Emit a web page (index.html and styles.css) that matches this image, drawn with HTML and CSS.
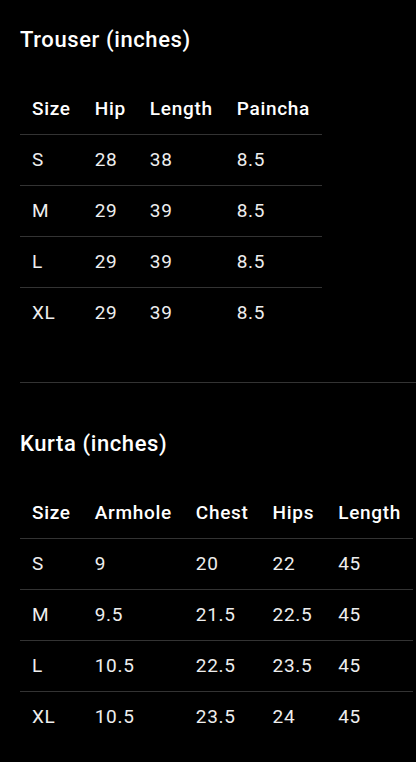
FILE: index.html
```html
<!DOCTYPE html>
<html lang="en">
<head>
    <meta charset="UTF-8">
    <meta name="viewport" content="width=device-width, initial-scale=1.0">
    <title>Size Chart</title>
    <link rel="stylesheet" href="styles.css">
</head>
<body>

    <div class="chart">
        <h2>Trouser (inches)</h2>
        <table class="sizes">
            <thead>
                <tr>
                    <th>Size</th>
                    <th>Hip</th>
                    <th>Length</th>
                    <th>Paincha</th>
                </tr>
            </thead>
            <tbody>
                <tr><td>S</td><td>28</td><td>38</td><td>8.5</td></tr>
                <tr><td>M</td><td>29</td><td>39</td><td>8.5</td></tr>
                <tr><td>L</td><td>29</td><td>39</td><td>8.5</td></tr>
                <tr><td>XL</td><td>29</td><td>39</td><td>8.5</td></tr>
            </tbody>
        </table>
    </div>

    <hr class="divider">

    <div class="chart">
        <h2>Kurta (inches)</h2>
        <table class="sizes">
            <thead>
                <tr>
                    <th>Size</th>
                    <th>Armhole</th>
                    <th>Chest</th>
                    <th>Hips</th>
                    <th>Length</th>
                </tr>
            </thead>
            <tbody>
                <tr><td>S</td><td>9</td><td>20</td><td>22</td><td>45</td></tr>
                <tr><td>M</td><td>9.5</td><td>21.5</td><td>22.5</td><td>45</td></tr>
                <tr><td>L</td><td>10.5</td><td>22.5</td><td>23.5</td><td>45</td></tr>
                <tr><td>XL</td><td>10.5</td><td>23.5</td><td>24</td><td>45</td></tr>
            </tbody>
        </table>
    </div>

</body>
</html>
```

FILE: styles.css
```css
body {
    font-family: Roboto, "Noto Sans", sans-serif;
    margin: 0;
    background-color: #000;
    color: #fff;
    overflow: hidden;
}
.chart {
    padding: 26px 0 44px 20px;
}
.chart + .divider + .chart {
    padding-top: 47px;
}
h2 {
    margin: 0;
    font-size: 22px;
    font-weight: 500;
    line-height: 28px;
    letter-spacing: 0.6px;
}
.sizes {
    border-collapse: collapse;
    margin-top: 30px;
}
th, td {
    padding: 14px 12px;
    font-size: 19px;
    line-height: 22px;
    letter-spacing: 0.7px;
    text-align: left;
    border-bottom: 1px solid #333;
    white-space: nowrap;
}
th {
    font-weight: 500;
}
td {
    color: #eee;
}
tbody tr:last-child td {
    border-bottom: none;
}
.divider {
    margin: 0 0 0 20px;
    border: none;
    border-top: 1px solid #333;
}
```
